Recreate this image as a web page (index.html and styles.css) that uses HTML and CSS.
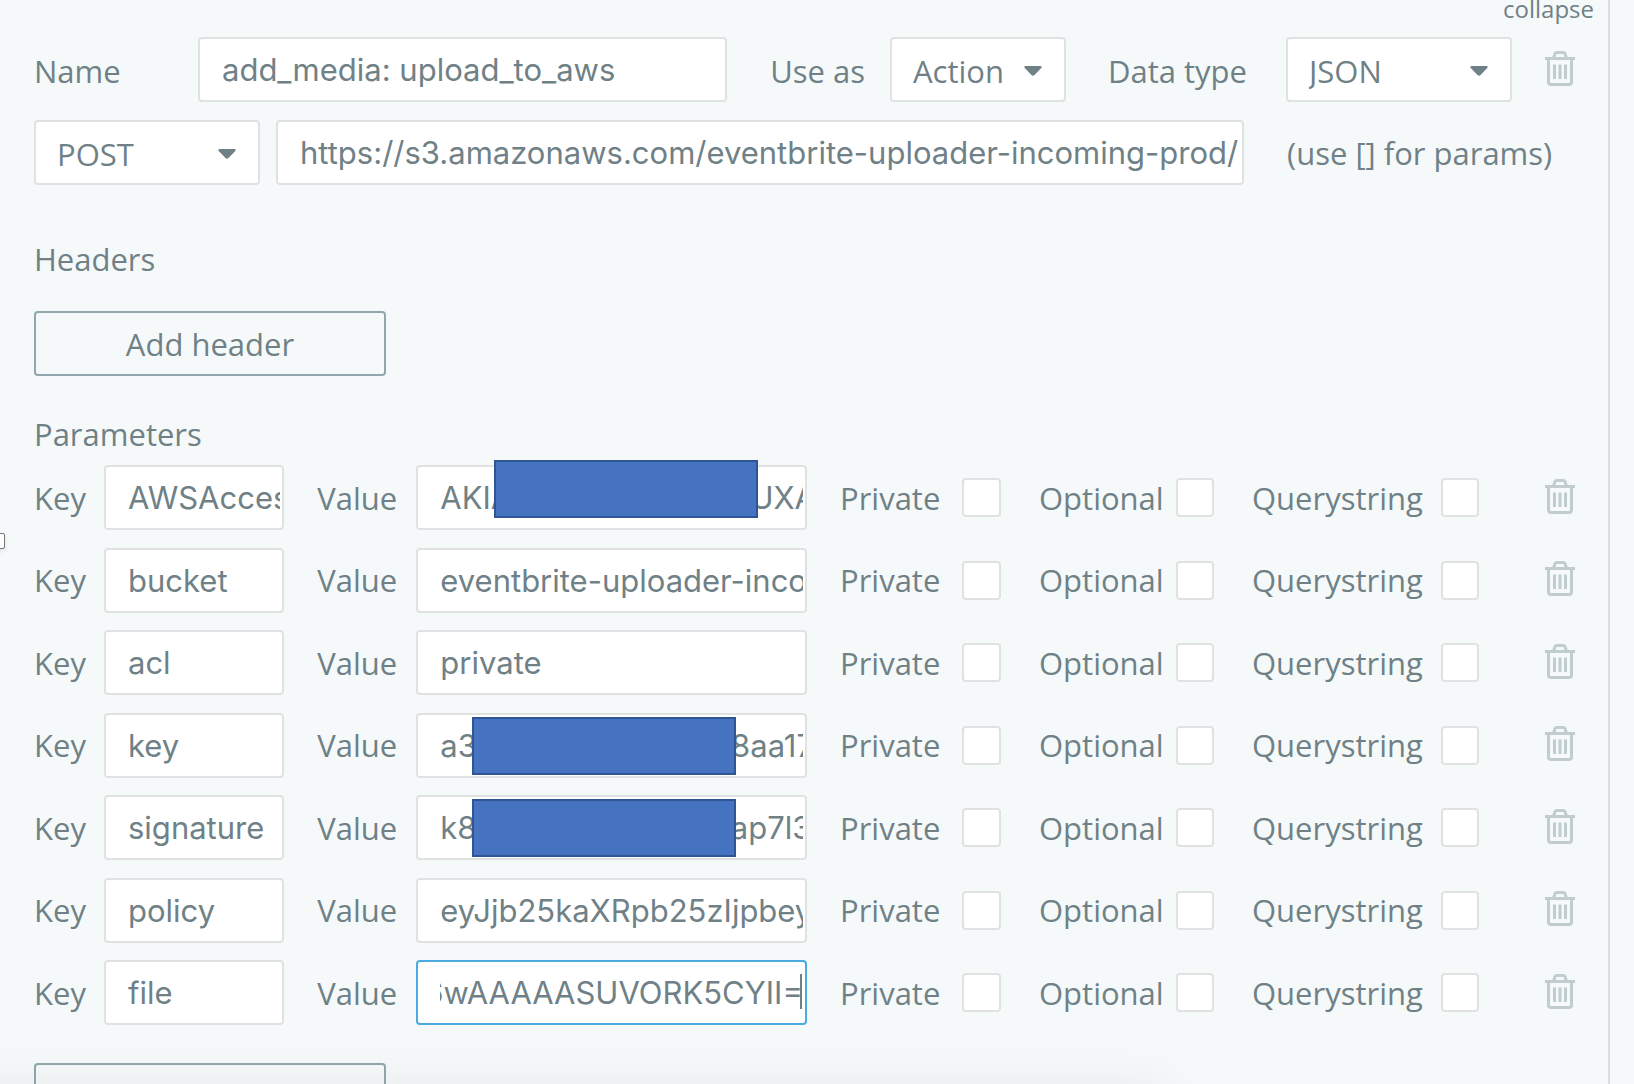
FILE: index.html
```html
<!DOCTYPE html>
<html lang="en">

<head>
    <meta charset="UTF-8">
    <meta name="viewport" content="width=device-width, initial-scale=1.0">
    <title>API call</title>
    <link rel="stylesheet" href="styles.css">
</head>

<body>
    <svg class="sprite" aria-hidden="true">
        <symbol id="trash" viewBox="0 0 32 36">
            <path d="M1 8.500H31" stroke-width="3" />
            <path d="M9.500 8L11 3.500Q11.500 2.500 13 2.500H19Q20.500 2.500 21 3.500L22.500 8" stroke-width="3" />
            <path d="M4.500 8.500V32Q4.500 34.500 7 34.500H25Q27.500 34.500 27.500 32V8.500" stroke-width="3" />
            <path d="M10.500 14.500V29M16 14.500V29M21.500 14.500V29" stroke-width="3" />
        </symbol>
        <symbol id="caret" viewBox="0 0 18 10">
            <path d="M1.500 0H16.500Q18.500 0.500 17.300 2L10.500 9Q9 10.500 7.500 9L0.700 2Q-0.500 0.500 1.500 0Z" />
        </symbol>
    </svg>

    <main class="panel">
        <div class="top">
            <button class="collapse" type="button">collapse</button>
        </div>

        <form class="call">
            <div class="row">
                <label class="name-label" for="name">Name</label>
                <input class="field grow" id="name" type="text" value="add_media: upload_to_aws">
                <label class="use-label" for="use-as">Use as</label>
                <div class="select small">
                    <select id="use-as"><option>Action</option><option>Data</option></select>
                    <svg class="arrow"><use href="#caret" /></svg>
                </div>
                <label class="type-label" for="data-type">Data type</label>
                <div class="select">
                    <select id="data-type"><option>JSON</option><option>XML</option></select>
                    <svg class="arrow"><use href="#caret" /></svg>
                </div>
                <button class="delete" type="button" aria-label="Delete call"><svg><use href="#trash" /></svg></button>
            </div>

            <div class="row url-row">
                <div class="select">
                    <select aria-label="Method"><option>POST</option><option>GET</option></select>
                    <svg class="arrow"><use href="#caret" /></svg>
                </div>
                <input class="field grow" type="text" aria-label="URL" value="https://s3.amazonaws.com/eventbrite-uploader-incoming-prod/">
                <span class="hint">(use [] for params)</span>
            </div>

            <h2 class="headers-title">Headers</h2>
            <button class="add" type="button">Add header</button>

            <h2 class="params-title">Parameters</h2>
            <div class="params">
                <div class="param">
                    <label for="key1">Key</label>
                    <input class="field" id="key1" type="text" value="AWSAccessKeyId">
                    <label class="value-label" for="value1">Value</label>
                    <div class="value">
                        <input class="field" id="value1" type="text" value="AKIAOOOXXXXXXXXUXA">
                        <span class="mask mask-wide"></span>
                    </div>
                    <label class="check private">Private <input type="checkbox"></label>
                    <label class="check">Optional <input type="checkbox"></label>
                    <label class="check">Querystring <input type="checkbox"></label>
                    <button class="delete" type="button" aria-label="Delete parameter"><svg><use href="#trash" /></svg></button>
                </div>
                <div class="param">
                    <label for="key2">Key</label>
                    <input class="field" id="key2" type="text" value="bucket">
                    <label class="value-label" for="value2">Value</label>
                    <div class="value">
                        <input class="field" id="value2" type="text" value="eventbrite-uploader-incoming-prod">
                    </div>
                    <label class="check private">Private <input type="checkbox"></label>
                    <label class="check">Optional <input type="checkbox"></label>
                    <label class="check">Querystring <input type="checkbox"></label>
                    <button class="delete" type="button" aria-label="Delete parameter"><svg><use href="#trash" /></svg></button>
                </div>
                <div class="param">
                    <label for="key3">Key</label>
                    <input class="field" id="key3" type="text" value="acl">
                    <label class="value-label" for="value3">Value</label>
                    <div class="value">
                        <input class="field" id="value3" type="text" value="private">
                    </div>
                    <label class="check private">Private <input type="checkbox"></label>
                    <label class="check">Optional <input type="checkbox"></label>
                    <label class="check">Querystring <input type="checkbox"></label>
                    <button class="delete" type="button" aria-label="Delete parameter"><svg><use href="#trash" /></svg></button>
                </div>
                <div class="param">
                    <label for="key4">Key</label>
                    <input class="field" id="key4" type="text" value="key">
                    <label class="value-label" for="value4">Value</label>
                    <div class="value">
                        <input class="field" id="value4" type="text" value="a300000000000008aa17">
                        <span class="mask"></span>
                    </div>
                    <label class="check private">Private <input type="checkbox"></label>
                    <label class="check">Optional <input type="checkbox"></label>
                    <label class="check">Querystring <input type="checkbox"></label>
                    <button class="delete" type="button" aria-label="Delete parameter"><svg><use href="#trash" /></svg></button>
                </div>
                <div class="param">
                    <label for="key5">Key</label>
                    <input class="field" id="key5" type="text" value="signature">
                    <label class="value-label" for="value5">Value</label>
                    <div class="value">
                        <input class="field" id="value5" type="text" value="k80000000000000ap7l3">
                        <span class="mask"></span>
                    </div>
                    <label class="check private">Private <input type="checkbox"></label>
                    <label class="check">Optional <input type="checkbox"></label>
                    <label class="check">Querystring <input type="checkbox"></label>
                    <button class="delete" type="button" aria-label="Delete parameter"><svg><use href="#trash" /></svg></button>
                </div>
                <div class="param">
                    <label for="key6">Key</label>
                    <input class="field" id="key6" type="text" value="policy">
                    <label class="value-label" for="value6">Value</label>
                    <div class="value">
                        <input class="field" id="value6" type="text" value="eyJjb25kaXRpb25zIjpbeyJ">
                    </div>
                    <label class="check private">Private <input type="checkbox"></label>
                    <label class="check">Optional <input type="checkbox"></label>
                    <label class="check">Querystring <input type="checkbox"></label>
                    <button class="delete" type="button" aria-label="Delete parameter"><svg><use href="#trash" /></svg></button>
                </div>
                <div class="param">
                    <label for="key7">Key</label>
                    <input class="field" id="key7" type="text" value="file">
                    <label class="value-label" for="value7">Value</label>
                    <div class="value">
                        <input class="field active" id="value7" type="text" value="AAAA6wAAAAASUVORK5CYII=">
                        <span class="cursor"></span>
                    </div>
                    <label class="check private">Private <input type="checkbox"></label>
                    <label class="check">Optional <input type="checkbox"></label>
                    <label class="check">Querystring <input type="checkbox"></label>
                    <button class="delete" type="button" aria-label="Delete parameter"><svg><use href="#trash" /></svg></button>
                </div>
            </div>

            <button class="add add-param" type="button">Add parameter</button>
        </form>
    </main>

    <span class="handle"></span>
    <div class="bottom-shadow"></div>

    <script>
        // keep the end of the long file value in view
        let file = document.getElementById("value7");
        file.scrollLeft = file.scrollWidth;
    </script>
</body>

</html>
```
FILE: styles.css
```css
*{
    margin: 0;
    padding: 0;
    box-sizing: border-box;
}
body{
    height: 100vh;
    overflow: hidden;
    position: relative;
    background-color: #f5f9fa;
    color: #6f8186;
    font-family: "Open Sans", sans-serif;
    font-size: 31px;
    line-height: 40px;
}
button, select{
    font: inherit;
    color: inherit;
}
.sprite{
    display: none;
}
.panel{
    min-height: 100vh;
    margin-right: 24px;
    padding: 0 14px 0 34px;
    border-right: 2px solid #dcdfe0;
}
.top{
    display: flex;
    justify-content: flex-end;
    margin-bottom: 21px;
}
.collapse{
    border: none;
    background: none;
    font-size: 24px;
    line-height: 18px;
    height: 16px;
}
.call{
    padding-right: 18px;
}
.row{
    display: flex;
    align-items: center;
}
.row label{
    padding-top: 2px;
}
.url-row{
    margin-top: 18px;
}
.name-label{
    width: 164px;
}
.use-label{
    margin: 0 25px 0 43px;
}
.type-label{
    margin: 0 39px 0 42px;
}
.field{
    width: 100%;
    min-width: 0;
    height: 65px;
    padding: 0 2px 0 22px;
    border: 2px solid #e0e1e1;
    border-radius: 4px;
    background-color: #fff;
    color: inherit;
    font-family: Inter, sans-serif;
    font-size: 31px;
    outline: none;
}
.grow{
    flex: 1;
}
.active{
    border-color: #4aabe0;
}
.select{
    position: relative;
    flex: none;
    width: 226px;
}
.select.small{
    width: 176px;
}
.select select{
    display: block;
    width: 100%;
    height: 65px;
    padding: 2px 0 0 21px;
    border: 2px solid #e0e1e1;
    border-radius: 4px;
    background-color: #fff;
    appearance: none;
    outline: none;
}
.arrow{
    position: absolute;
    top: 29px;
    right: 24px;
    width: 18px;
    height: 10px;
    fill: #6f8186;
    pointer-events: none;
}
.delete{
    display: flex;
    justify-content: flex-end;
    flex: none;
    width: 64px;
    padding-bottom: 4px;
    border: none;
    background: none;
}
.delete svg{
    width: 32px;
    height: 36px;
    fill: none;
    stroke: #c1cccf;
}
.url-row .field{
    margin-left: 16px;
}
.hint{
    width: 332px;
    padding-left: 43px;
    white-space: nowrap;
}
h2{
    font-size: inherit;
    font-weight: normal;
}
.headers-title{
    margin-top: 54px;
}
.add{
    display: block;
    width: 352px;
    height: 65px;
    margin-top: 32px;
    border: 2px solid #92a7ad;
    border-radius: 4px;
    background: none;
}
.params-title{
    margin: 38px 0 11px;
}
.params{
    display: flex;
    flex-direction: column;
    justify-content: space-between;
    min-height: 560px;
}
.param{
    display: grid;
    grid-template-columns: 70px minmax(0, 6fr) 132px minmax(0, 13fr) 194px 213px 265px 97px;
    align-items: center;
}
.value-label{
    padding-left: 33px;
}
.value{
    position: relative;
}
.value .field{
    display: block;
}
.check{
    display: flex;
    justify-content: space-between;
    align-items: center;
    padding-left: 38px;
}
.private{
    padding-left: 33px;
}
.check input{
    width: 38px;
    height: 39px;
    border: 2px solid #e0e1e1;
    border-radius: 4px;
    background-color: #fff;
    appearance: none;
}
.private input{
    width: 39px;
}
.param .delete{
    width: auto;
}
.mask{
    position: absolute;
    top: 4px;
    left: 56px;
    width: 264px;
    height: 58px;
    border: 2px solid #2f5597;
    background-color: #4573c0;
}
.mask-wide{
    top: -5px;
    left: 78px;
}
.cursor{
    position: absolute;
    top: 14px;
    right: 5px;
    width: 2px;
    height: 35px;
    background-color: #6f8186;
}
.add-param{
    margin-top: 38px;
}
.handle{
    position: absolute;
    top: 533px;
    left: -12px;
    width: 17px;
    height: 16px;
    border: 1px solid #777;
    border-radius: 2px;
    background-color: #fff;
    box-shadow: 0 2px 4px rgba(0, 0, 0, 0.1);
}
.bottom-shadow{
    position: absolute;
    top: 100%;
    left: -60px;
    right: 466px;
    height: 100px;
    box-shadow: 0 0 50px rgba(0, 0, 0, 0.06);
    pointer-events: none;
}
```
